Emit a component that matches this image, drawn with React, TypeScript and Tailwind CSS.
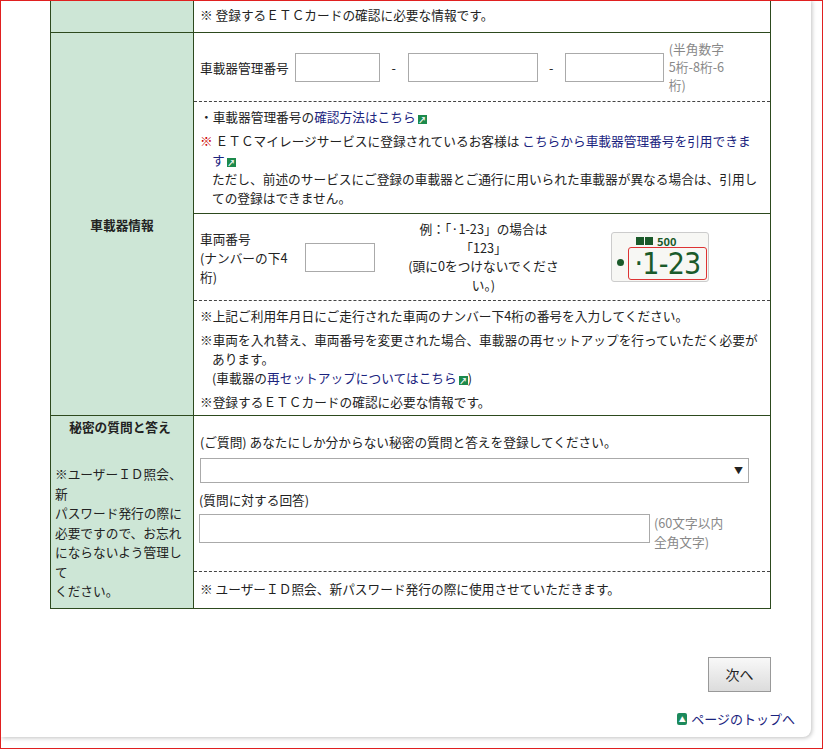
import React from "react";

const ext = (
  <span className="inline-block indent-0 align-[-1px] ml-[2px] w-[9px] h-[9px] bg-[#1c8a4c] text-white text-[8px] leading-[9px] text-center font-bold">↗</span>
);

function Plate() {
  return (
    <div className="w-[98px] h-[50px] rounded-[3px] border border-[#ccc] bg-[#f7f7f4] relative">
      <div className="absolute left-[24px] top-[3px] flex items-center gap-[1px]">
        <span className="w-[8px] h-[8px] bg-[#1a5a2a]" />
        <span className="w-[8px] h-[8px] bg-[#1a5a2a] mr-[3px]" />
        <span className="text-[11px] leading-[10px] text-[#1a5a2a] font-bold">500</span>
      </div>
      <span className="absolute left-[5px] top-[26px] w-[7px] h-[7px] rounded-full bg-[#1a5a2a]" />
      <div className="absolute left-[16px] top-[14px] w-[79px] h-[33px] border border-[#d33] rounded-[3px] flex items-center justify-center text-[#1a5a2a] text-[30px] leading-none tracking-tight" style={{ fontFamily: "'Liberation Sans Narrow','DejaVu Sans Condensed',sans-serif" }}>
        ·1-23
      </div>
    </div>
  );
}

export default function App() {
  const link = "text-[#1a237e]";
  return (
    <div className="w-[823px] h-[749px] border border-[#e02020] bg-white overflow-hidden text-[12.7px] leading-[19px] text-[#222]" style={{ fontFamily: "'Noto Sans CJK JP','Noto Sans',sans-serif" }}>
      <div className="w-[810px] h-[737px] bg-white rounded-br-[8px] shadow-[1px_1px_4px_rgba(0,0,0,0.25)] relative -mt-px">
        <div className="ml-[49px] w-[721px] border border-[#2d4a1e] border-t-0">
          {/* row 0 */}
          <div className="flex border-b border-[#2d4a1e] h-[33px]">
            <div className="w-[143px] bg-[#cde6d6] border-r border-[#2d4a1e]" />
            <div className="flex-1 px-[6px] pt-[5px]">※ 登録するＥＴＣカードの確認に必要な情報です。</div>
          </div>
          {/* row 1 */}
          <div className="flex border-b border-[#2d4a1e]">
            <div className="w-[143px] bg-[#cde6d6] border-r border-[#2d4a1e] flex items-center justify-center font-bold">車載器情報</div>
            <div className="flex-1">
              <div className="h-[69px] flex items-center px-[6px] border-b border-dashed border-[#444]">
                <span>車載器管理番号</span>
                <input className="ml-[6px] w-[85px] h-[29px] border border-[#aaa]" />
                <span className="w-[28px] text-center">-</span>
                <input className="w-[130px] h-[29px] border border-[#aaa]" />
                <span className="w-[27px] text-center">-</span>
                <input className="w-[99px] h-[29px] border border-[#aaa]" />
                <span className="ml-[5px] w-[58px] text-[#888] leading-[18px]">(半角数字 5桁-8桁-6桁)</span>
              </div>
              <div className="h-[112px] pl-[6px] pr-[8px] pt-[5px] border-b border-[#2d4a1e]">
                <div className="mb-[5px]">・車載器管理番号の<span className={link}>確認方法はこちら</span>{ext}</div>
                <div className="pl-[12px] -indent-[12px]">
                  <span className="text-[#c00]">※</span> ＥＴＣマイレージサービスに登録されているお客様は <span className={link}>こちらから車載器管理番号を引用できます</span>{ext}
                  <br />ただし、前述のサービスにご登録の車載器とご通行に用いられた車載器が異なる場合は、引用しての登録はできません。
                </div>
              </div>
              <div className="h-[87px] flex items-center px-[6px] border-b border-dashed border-[#444]">
                <div className="w-[98px] leading-[19px]">車両番号<br />(ナンバーの下4桁)</div>
                <input className="ml-[7px] w-[70px] h-[29px] border border-[#aaa]" />
                <div className="ml-[26px] w-[165px] text-center leading-[18.5px]">例：「·1-23」の場合は「123」<br />(頭に0をつけないでください。)</div>
                <div className="ml-[45px]"><Plate /></div>
              </div>
              <div className="h-[114px] pl-[6px] pr-[8px] pt-[5px]">
                <div className="mb-[5px]">※上記ご利用年月日にご走行された車両のナンバー下4桁の番号を入力してください。</div>
                <div className="pl-[12px] -indent-[12px] mb-[5px]">
                  ※車両を入れ替え、車両番号を変更された場合、車載器の再セットアップを行っていただく必要があります。
                  <br />(車載器の<span className={link}>再セットアップについてはこちら</span>{ext})
                </div>
                <div>※登録するＥＴＣカードの確認に必要な情報です。</div>
              </div>
            </div>
          </div>
          {/* row 2 */}
          <div className="flex h-[192px]">
            <div className="w-[143px] bg-[#cde6d6] border-r border-[#2d4a1e] pl-[4px] pr-[8px] pt-[1px]">
              <div className="text-center font-bold">秘密の質問と答え</div>
              <div className="mt-[28px] leading-[19.5px]">※ユーザーＩＤ照会、<br />新<br />パスワード発行の際に必要ですので、お忘れにならないよう管理して<br />ください。</div>
            </div>
            <div className="flex-1">
              <div className="h-[156px] px-[5px] pt-[16px] border-b border-dashed border-[#444]">
                <div className="ml-[1px]">(ご質問) あなたにしか分からない秘密の質問と答えを登録してください。</div>
                <div className="mt-[7px] ml-[1px] w-[549px] h-[25px] border border-[#aaa] flex items-center justify-end pr-[5px] text-[9px]">▼</div>
                <div className="mt-[7px]">(質問に対する回答)</div>
                <div className="mt-[5px] flex">
                  <input className="w-[451px] h-[29px] border border-[#aaa]" />
                  <span className="ml-[4px] text-[#888] leading-[19px] -mt-[1px]">(60文字以内<br />全角文字)</span>
                </div>
              </div>
              <div className="px-[6px] pt-[7px]">※ ユーザーＩＤ照会、新パスワード発行の際に使用させていただきます。</div>
            </div>
          </div>
        </div>
        <div className="flex justify-end pr-[40px] mt-[48px]">
          <button className="w-[63px] h-[35px] border border-[#999] bg-gradient-to-b from-[#f8f8f8] to-[#dcdcdc] text-[14px]">次へ</button>
        </div>
        <div className="flex justify-end items-center pr-[16px] mt-[17px] text-[#1a237e] text-[13px]">
          <span className="w-[10px] h-[12px] bg-[#1c8a5c] rounded-[2px] text-white text-[7px] leading-[12px] text-center mr-[4px]">▲</span>
          ページのトップへ
        </div>
      </div>
    </div>
  );
}
